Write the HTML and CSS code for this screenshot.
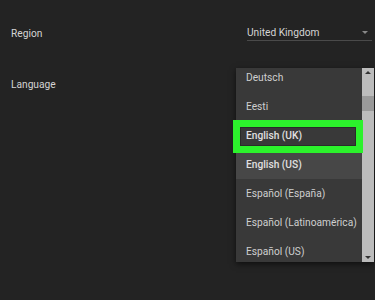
FILE: index.html
```html
<!DOCTYPE html>
<html>
<head>
<meta charset="utf-8">
<link rel="stylesheet" href="styles.css">
</head>
<body>
<div class="page">
  <div class="row region">
    <div class="label">Region</div>
    <div class="select">
      <span class="value">United Kingdom</span>
      <span class="caret"></span>
    </div>
  </div>
  <div class="row language">
    <div class="label">Language</div>
  </div>
</div>
<div class="menu">
  <ul class="list">
    <li>Deutsch</li>
    <li>Eesti</li>
    <li class="bold">English (UK)</li>
    <li class="bold hover">English (US)</li>
    <li>Español (España)</li>
    <li>Español (Latinoamérica)</li>
    <li>Español (US)</li>
  </ul>
  <div class="scrollbar">
    <span class="arrow up"></span>
    <span class="thumb"></span>
    <span class="arrow down"></span>
  </div>
</div>
<div class="highlight"></div>
</body>
</html>
```
FILE: styles.css
```css
html, body {
  margin: 0;
  padding: 0;
  background: #232323;
  font-family: Roboto, "Noto Sans", sans-serif;
  color: #d6d6d6;
  height: 300px;
  overflow: hidden;
}
.page {
  padding: 21px 3px 0 11px;
}
.row {
  display: flex;
  align-items: flex-start;
}
.region {
  height: 25px;
}
.language {
  margin-top: 26px;
  height: 25px;
}
.label {
  font-size: 10.2px;
  line-height: 25px;
  flex: 1;
  color: #d4d4d4;
}
.select {
  width: 125px;
  height: 15px;
  margin-top: 5px;
  display: flex;
  align-items: center;
  border-bottom: 1px solid #4a4a4a;
  box-sizing: border-box;
  padding-bottom: 1px;
}
.value {
  flex: 1;
  font-size: 10.2px;
  color: #d4d4d4;
}
.caret {
  width: 0;
  height: 0;
  border-left: 3px solid transparent;
  border-right: 3px solid transparent;
  border-top: 3px solid #888;
  margin-right: 4px;
}
.menu {
  position: absolute;
  left: 236px;
  top: 68px;
  width: 138px;
  height: 194px;
  background: #393939;
  box-shadow: 0 2px 6px rgba(0,0,0,0.6);
  display: flex;
  overflow: hidden;
}
.list {
  list-style: none;
  margin: -5px 0 0 0;
  padding: 0;
  flex: 1;
}
.list li {
  height: 29px;
  line-height: 29px;
  padding-left: 10px;
  font-size: 10.2px;
  color: #cfcfcf;
  white-space: nowrap;
}
.list li.bold {
  font-weight: 500;
  color: #e0e0e0;
}
.list li.hover {
  background: #474747;
}
.scrollbar {
  width: 12px;
  background: #bcbcbc;
  position: relative;
  display: flex;
  flex-direction: column;
  align-items: center;
}
.thumb {
  position: absolute;
  left: 0;
  right: 0;
  top: 28px;
  height: 15px;
  background: #9a9a9a;
}
.arrow {
  width: 0;
  height: 0;
  border-left: 3px solid transparent;
  border-right: 3px solid transparent;
}
.arrow.up {
  border-bottom: 3px solid #333;
  margin-top: 3px;
}
.arrow.down {
  border-top: 3px solid #333;
  margin-top: auto;
  margin-bottom: 3px;
}
.highlight {
  position: absolute;
  left: 233px;
  top: 120px;
  width: 130px;
  height: 33px;
  box-sizing: border-box;
  border: 7px solid #2cf22c;
  box-shadow: inset 0 0 0 1px #2a2a2a;
}
```
